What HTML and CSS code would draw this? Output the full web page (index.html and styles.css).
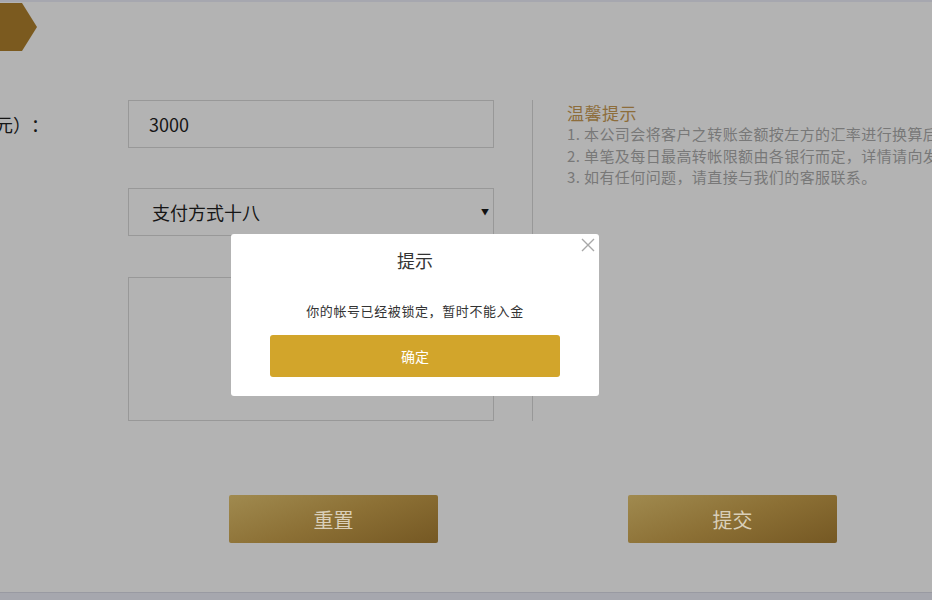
FILE: index.html
```html
<!DOCTYPE html>
<html lang="zh-CN">
<head>
<meta charset="utf-8">
<title>入金</title>
<link rel="stylesheet" href="styles.css">
</head>
<body>
<div class="page">
  <div class="top-bar"></div>
  <div class="header"><div class="tab"></div></div>
  <div class="main">
    <div class="form">
      <div class="row">
        <div class="label">存款金额（元）：</div>
        <div class="field input">3000</div>
      </div>
      <div class="row row-select">
        <div class="label"></div>
        <div class="field select"><span>支付方式十八</span><span class="caret">▼</span></div>
      </div>
      <div class="row row-area">
        <div class="label"></div>
        <div class="field area"></div>
      </div>
    </div>
    <div class="divider"></div>
    <div class="tips">
      <div class="tips-title">温馨提示</div>
      <div class="tips-line">1. 本公司会将客户之转账金额按左方的汇率进行换算后存入您的账户。</div>
      <div class="tips-line">2. 单笔及每日最高转帐限额由各银行而定，详情请向发卡银行查询。</div>
      <div class="tips-line">3. 如有任何问题，请直接与我们的客服联系。</div>
    </div>
  </div>
  <div class="actions">
    <button class="gold-btn reset">重置</button>
    <button class="gold-btn submit">提交</button>
  </div>
  <div class="bottom-bar"></div>
</div>
<div class="mask"></div>
<div class="modal">
  <span class="close"><svg width="14" height="14" viewBox="0 0 14 14"><path d="M1 1 L13 13 M13 1 L1 13" stroke="#a8a8a8" stroke-width="1.4" fill="none"/></svg></span>
  <div class="modal-title">提示</div>
  <div class="modal-msg">你的帐号已经被锁定，暂时不能入金</div>
  <button class="ok-btn">确定</button>
</div>
</body>
</html>
```
FILE: styles.css
```css
html, body {
  margin: 0;
  padding: 0;
}
body {
  width: 932px;
  height: 600px;
  overflow: hidden;
  background: #b3b3b3;
  font-family: "Noto Sans CJK SC", "Microsoft YaHei", sans-serif;
  text-spacing-trim: space-all;
  position: relative;
}
.page {
  height: 600px;
  display: flex;
  flex-direction: column;
}
.top-bar {
  height: 2px;
  background: #a6a7af;
}
.header {
  padding-top: 1px;
  height: 48px;
}
.tab {
  width: 37px;
  height: 48px;
  background: #7b5a1f;
  clip-path: polygon(0 0, 22px 0, 37px 24px, 22px 48px, 0 48px);
}
.main {
  margin-top: 49px;
  display: flex;
  align-items: flex-start;
}
.form {
  margin-left: -100px;
  width: 594px;
  flex-shrink: 0;
  display: flex;
  flex-direction: column;
}
.row {
  display: flex;
  align-items: center;
}
.row-select { margin-top: 40px; }
.row-area { margin-top: 41px; }
.label {
  width: 228px;
  flex-shrink: 0;
  box-sizing: border-box;
  padding-right: 79px;
  text-align: right;
  white-space: nowrap;
  font-size: 18px;
  color: #161616;
}
.field {
  width: 366px;
  box-sizing: border-box;
  border: 1px solid #989898;
  color: #161616;
  font-size: 18px;
}
.input {
  height: 48px;
  line-height: 46px;
  padding-left: 20px;
}
.select {
  height: 48px;
  line-height: 46px;
  padding-left: 23px;
  padding-right: 4px;
  display: flex;
  justify-content: space-between;
  align-items: center;
}
.caret {
  font-size: 8px;
  color: #111;
  line-height: 1;
}
.area {
  height: 144px;
}
.divider {
  margin-left: 38px;
  width: 1px;
  flex-shrink: 0;
  height: 321px;
  background: #989898;
}
.tips {
  padding-left: 34px;
  white-space: nowrap;
}
.tips-title {
  margin-top: 3px;
  font-size: 17px;
  letter-spacing: 0.5px;
  line-height: 20px;
  color: #8d6d3b;
}
.tips-line {
  font-size: 15px;
  letter-spacing: 0.4px;
  line-height: 21.5px;
  color: #787878;
}
.actions {
  margin-top: 74px;
  display: flex;
}
.gold-btn {
  width: 209px;
  height: 48px;
  border: none;
  border-radius: 2px;
  background: linear-gradient(160deg, #a08a4f 0%, #8c7035 50%, #755823 100%);
  color: #d9cfb9;
  font-family: "Noto Sans CJK SC", "Microsoft YaHei", sans-serif;
  font-size: 20px;
  padding: 0;
}
.reset { margin-left: 229px; }
.submit { margin-left: 190px; }
.bottom-bar {
  margin-top: auto;
  height: 8px;
  box-sizing: border-box;
  border-top: 1px solid #999aa2;
  background: #a6a7ae;
}
.mask {
  position: absolute;
  inset: 0;
  background: rgba(0, 0, 0, 0);
}
.modal {
  position: absolute;
  left: 231px;
  top: 234px;
  width: 368px;
  height: 162px;
  box-sizing: border-box;
  background: #fff;
  border-radius: 3px;
  padding: 16px 39px 0;
  display: flex;
  flex-direction: column;
  align-items: center;
}
.close {
  position: absolute;
  right: 4px;
  top: 4px;
  width: 14px;
  height: 14px;
  display: block;
}
.close svg { display: block; }
.modal-title {
  font-size: 18px;
  line-height: 20px;
  color: #333;
}
.modal-msg {
  margin-top: 31px;
  font-size: 13px;
  letter-spacing: 0.6px;
  line-height: 20px;
  color: #333;
}
.ok-btn {
  margin-top: 14px;
  width: 290px;
  height: 42px;
  border: none;
  border-radius: 3px;
  background: #d2a52b;
  color: #fff;
  font-family: "Noto Sans CJK SC", "Microsoft YaHei", sans-serif;
  font-size: 14px;
  padding: 0;
}
```
